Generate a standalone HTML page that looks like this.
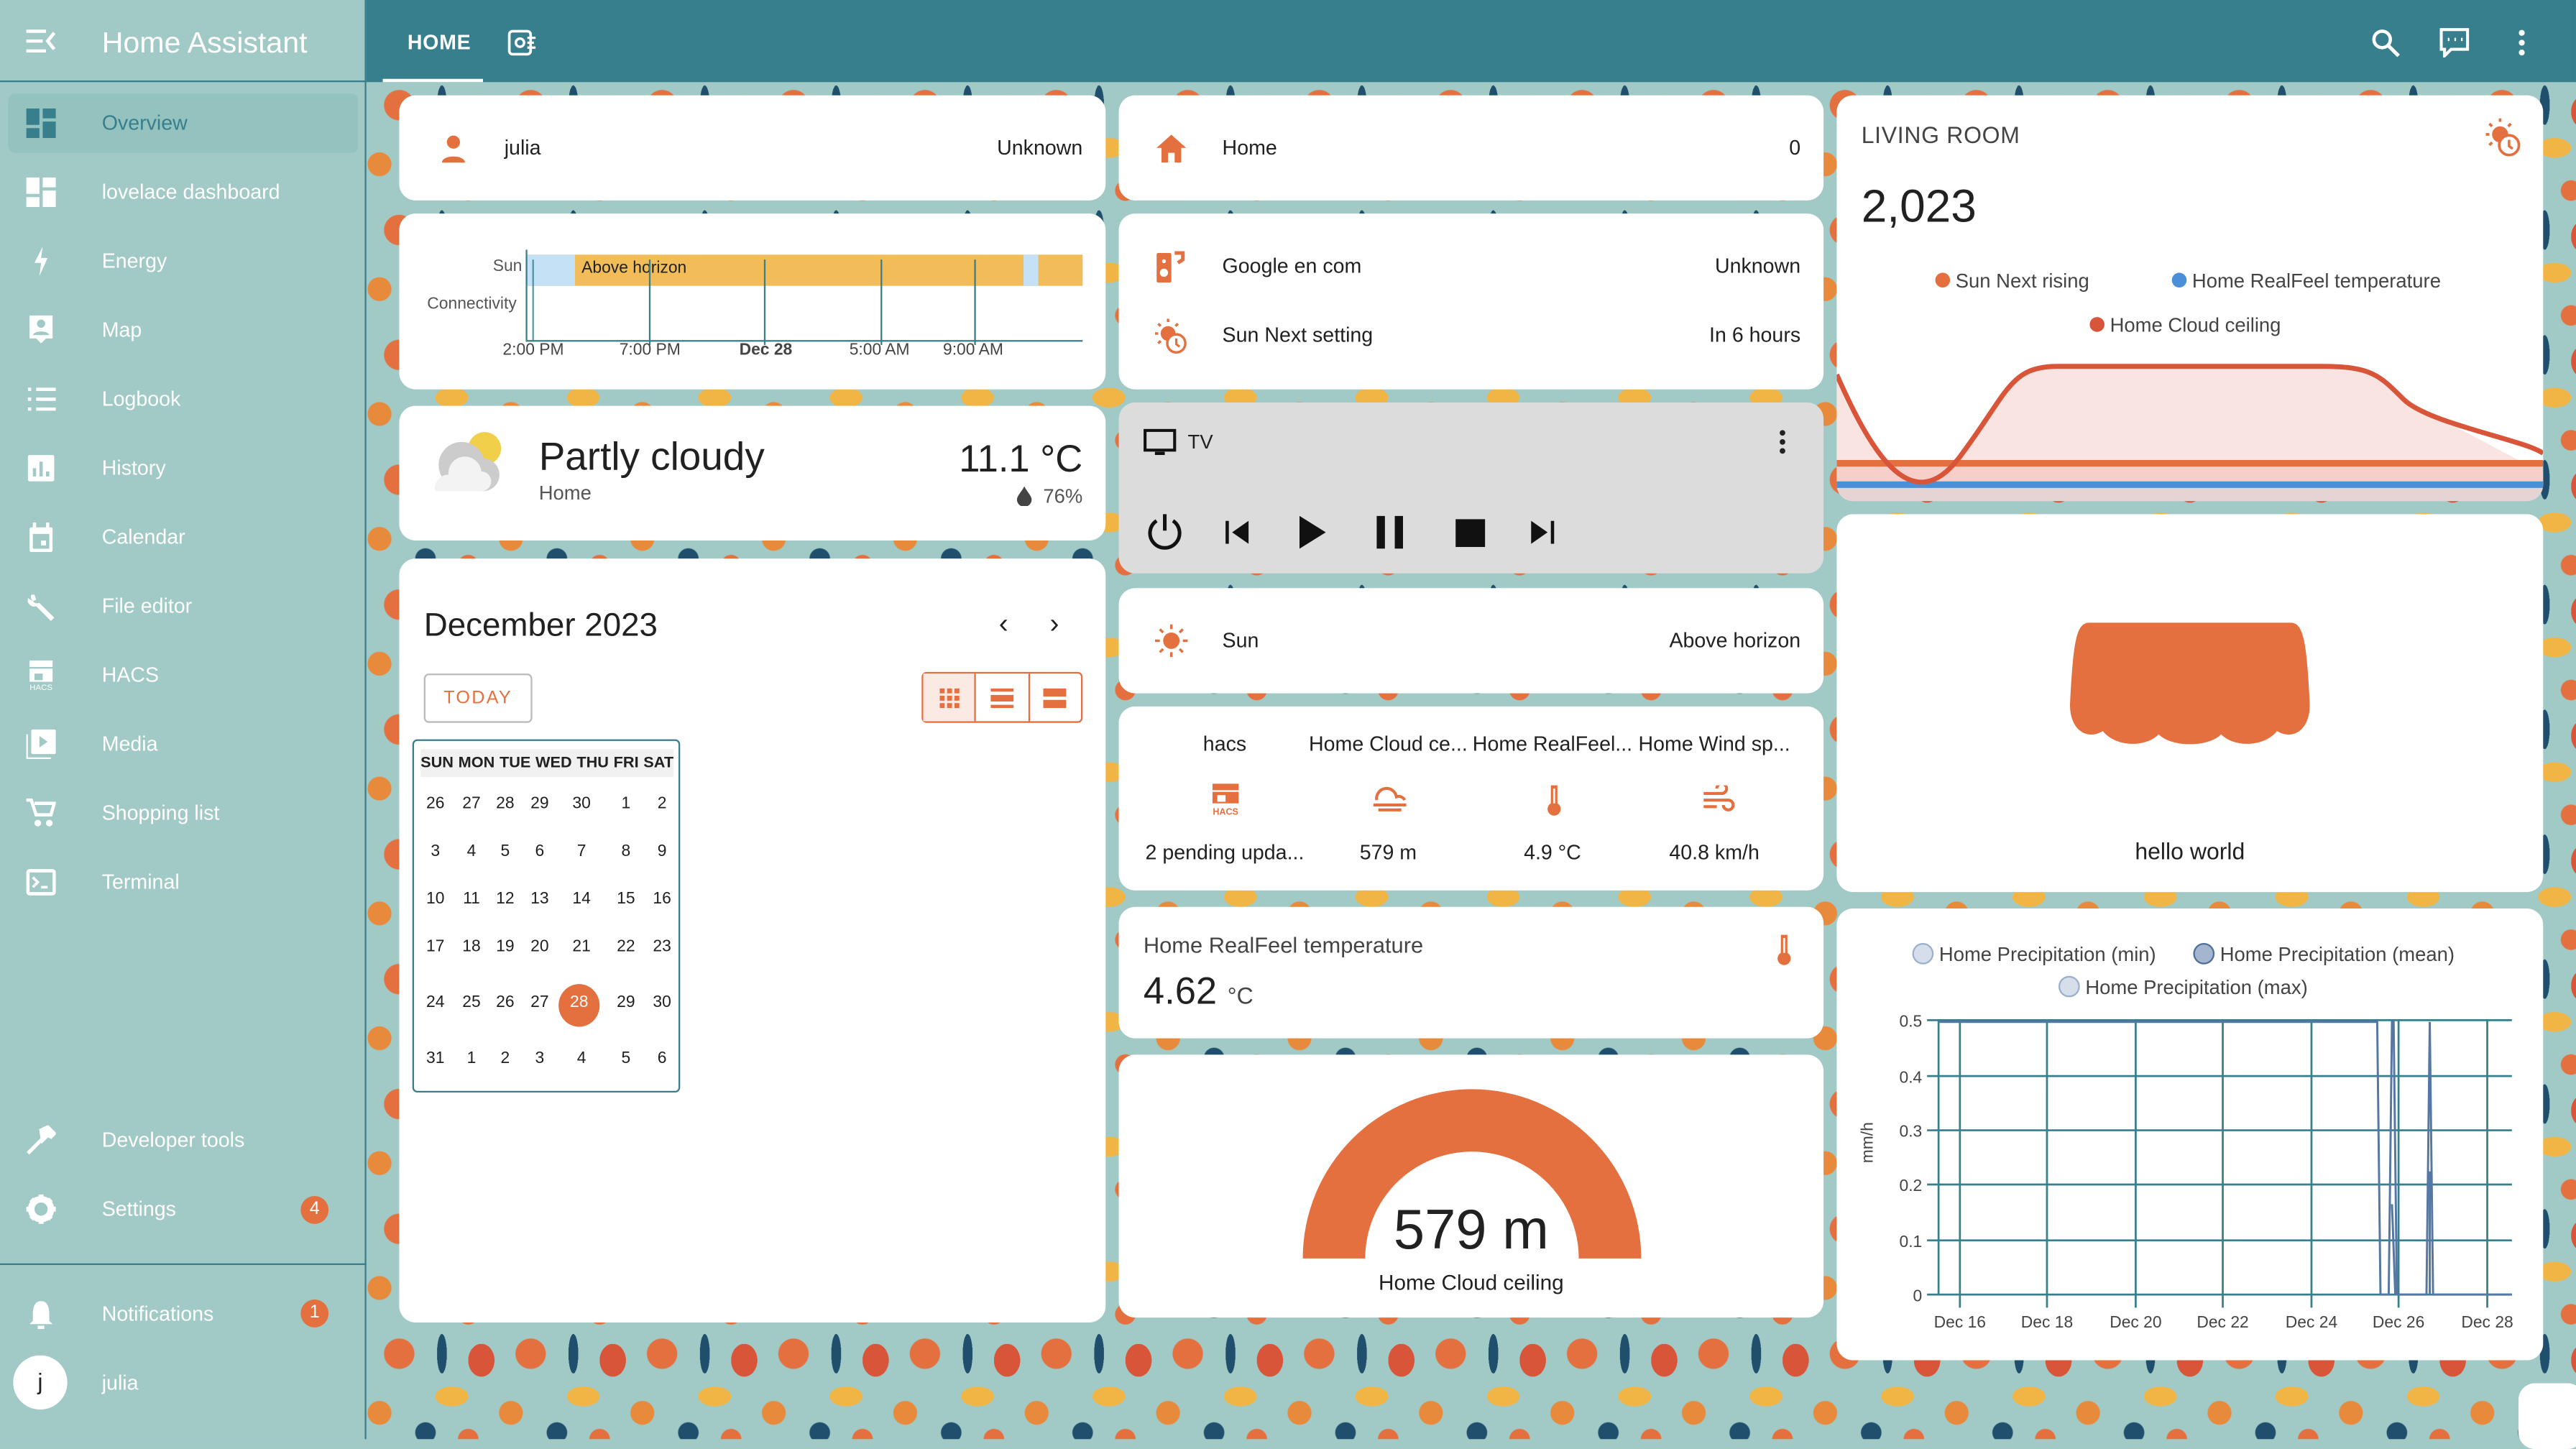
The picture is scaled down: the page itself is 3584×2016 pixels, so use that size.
<!DOCTYPE html>
<html><head><meta charset="utf-8"><style>
*{box-sizing:border-box;margin:0;padding:0}
html,body{width:3584px;height:2002px;overflow:hidden;background:#a1cac7}
#w{position:absolute;left:0;top:0;width:1568px;height:876px;transform:scale(2.2857);transform-origin:0 0;font-family:"Liberation Sans",sans-serif;color:#212121;font-size:12.5px}
.a{position:absolute}
#bg{left:223px;top:50px;width:1345px;height:826px;background-color:#a1cac7;
background-image:
radial-gradient(circle at 20px 14px,#e4703f 0 9px,transparent 9.5px),
radial-gradient(ellipse 10px 6px at 52px 40px,#f0b545 0 100%,transparent 100%),
radial-gradient(circle at 36px 62px,#1f4f6c 0 6px,transparent 6.5px),
radial-gradient(ellipse 8px 10px at 70px 18px,#d9553a 0 100%,transparent 100%),
radial-gradient(circle at 8px 50px,#e88a3c 0 7px,transparent 7.5px),
radial-gradient(circle at 62px 66px,#e4703f 0 6px,transparent 6.5px),
radial-gradient(ellipse 3px 12px at 46px 14px,#1f4f6c 0 100%,transparent 100%);
background-size:80px 76px}
#side{left:0;top:0;width:223px;height:876px;background:#a1cac7;border-right:1px solid #387f8d}
#top{left:223px;top:0;width:1345px;height:50px;background:#387f8d}
.card{position:absolute;background:#fff;border-radius:10px}
.si{position:absolute;left:62px;color:#fff;font-size:12.5px}
.ic{position:absolute;left:16px;width:18px;height:18px}
.row{position:absolute;font-size:12.5px}
.dot{display:inline-block;width:9px;height:9px;border-radius:50%;vertical-align:0}
</style></head><body><div id="w">
<div class="a" id="bg"></div>
<div class="a" id="side">
 <div class="a" style="left:0;top:0;width:223px;height:50px;border-bottom:1px solid #387f8d"></div>
 <svg class="a" style="left:16px;top:18px" width="18" height="14" viewBox="0 0 18 14"><path d="M0 1h12M0 7h10M0 13h12M17 2l-4 5 4 5" stroke="#fff" stroke-width="2" fill="none"/></svg>
 <div class="a" style="left:62px;top:16px;color:#fff;font-size:18px">Home Assistant</div>
 <div class="a" style="left:5px;top:57px;width:213px;height:36px;background:#93c2bf;border-radius:4px"></div>
 <svg class="ic" style="top:66px" viewBox="0 0 18 18"><path d="M0 0h8v10H0zM10 0h8v6h-8zM10 8h8v10h-8zM0 12h8v6H0z" fill="#387f8d"/></svg>
 <div class="si" style="top:68px;color:#387f8d">Overview</div>
 <svg class="ic" style="top:108px" viewBox="0 0 18 18"><path d="M0 0h8v10H0zM10 0h8v6h-8zM10 8h8v10h-8zM0 12h8v6H0z" fill="#fff"/></svg>
 <div class="si" style="top:110px">lovelace dashboard</div>
 <svg class="ic" style="top:150px" viewBox="0 0 18 18"><path d="M10 0L5 10h4l-1 8 5-11H9z" fill="#fff"/></svg>
 <div class="si" style="top:152px">Energy</div>
 <svg class="ic" style="top:192px" viewBox="0 0 18 18"><path d="M2 0h14v14h-4l-3 3-3-3H2z" fill="#fff"/><circle cx="9" cy="5" r="2.5" fill="#a1cac7"/><path d="M4 12c1-3 9-3 10 0z" fill="#a1cac7"/></svg>
 <div class="si" style="top:194px">Map</div>
 <svg class="ic" style="top:234px" viewBox="0 0 18 18"><path d="M6 3h12M6 9h12M6 15h12M1 3h2M1 9h2M1 15h2" stroke="#fff" stroke-width="2"/></svg>
 <div class="si" style="top:236px">Logbook</div>
 <svg class="ic" style="top:276px" viewBox="0 0 18 18"><rect x="1" y="1" width="16" height="16" rx="1" fill="#fff"/><path d="M5 14V9M9 14V5M13 14v-3" stroke="#a1cac7" stroke-width="2"/></svg>
 <div class="si" style="top:278px">History</div>
 <svg class="ic" style="top:318px" viewBox="0 0 18 18"><rect x="2" y="3" width="14" height="15" rx="1" fill="#fff"/><rect x="4" y="7" width="10" height="9" fill="#a1cac7"/><rect x="9" y="11" width="3" height="3" fill="#fff"/><path d="M5 0v4M13 0v4" stroke="#fff" stroke-width="2"/></svg>
 <div class="si" style="top:320px">Calendar</div>
 <svg class="ic" style="top:360px" viewBox="0 0 18 18"><path d="M3 2a4 4 0 005 5l9 9-2 2-9-9a4 4 0 01-5-5l3 2 2-1-1-3z" fill="#fff"/></svg>
 <div class="si" style="top:362px">File editor</div>
 <svg class="ic" style="top:402px" viewBox="0 0 18 18"><rect x="2" y="0" width="14" height="4" fill="#fff"/><rect x="2" y="5" width="14" height="8" fill="#fff"/><rect x="5" y="8" width="5" height="4" fill="#a1cac7"/><text x="9" y="18" font-size="5" fill="#fff" text-anchor="middle" font-family="Liberation Sans">HACS</text></svg>
 <div class="si" style="top:404px">HACS</div>
 <svg class="ic" style="top:444px" viewBox="0 0 18 18"><rect x="3" y="0" width="15" height="15" rx="1" fill="#fff"/><path d="M0 3v15h15" stroke="#fff" stroke-width="2" fill="none"/><path d="M8 4v7l5-3.5z" fill="#a1cac7"/></svg>
 <div class="si" style="top:446px">Media</div>
 <svg class="ic" style="top:486px" viewBox="0 0 18 18"><path d="M0 1h3l3 9h9l2-7H5" stroke="#fff" stroke-width="2" fill="none"/><circle cx="7" cy="15" r="2" fill="#fff"/><circle cx="14" cy="15" r="2" fill="#fff"/></svg>
 <div class="si" style="top:488px">Shopping list</div>
 <svg class="ic" style="top:528px" viewBox="0 0 18 18"><rect x="1" y="2" width="16" height="14" rx="1" stroke="#fff" stroke-width="2" fill="none"/><path d="M4 6l3 3-3 3M9 12h4" stroke="#fff" stroke-width="1.6" fill="none"/></svg>
 <div class="si" style="top:530px">Terminal</div>
 <svg class="ic" style="top:685px" viewBox="0 0 18 18"><path d="M1 17l10-10M9 3l4-2 4 4-2 2-2-1-3 3z" stroke="#fff" stroke-width="2.2" fill="#fff"/></svg>
 <div class="si" style="top:687px">Developer tools</div>
 <svg class="ic" style="top:727px" viewBox="0 0 18 18"><circle cx="9" cy="9" r="6" fill="none" stroke="#fff" stroke-width="4"/><path d="M9 0v4M9 14v4M0 9h4M14 9h4M3 3l3 3M12 12l3 3M3 15l3-3M12 6l3-3" stroke="#fff" stroke-width="3"/></svg>
 <div class="si" style="top:729px">Settings</div>
 <div class="a" style="left:183px;top:728px;width:17px;height:17px;border-radius:50%;background:#e4703f;color:#fff;font-size:11px;text-align:center;line-height:17px">4</div>
 <div class="a" style="left:0;top:769px;width:223px;border-top:1px solid #387f8d"></div>
 <svg class="ic" style="top:791px" viewBox="0 0 18 18"><path d="M9 1c4 0 5 4 5 8v4l2 2H2l2-2V9c0-4 1-8 5-8z" fill="#fff"/><path d="M7 17h4" stroke="#fff" stroke-width="2"/></svg>
 <div class="si" style="top:793px">Notifications</div>
 <div class="a" style="left:183px;top:791px;width:17px;height:17px;border-radius:50%;background:#e4703f;color:#fff;font-size:11px;text-align:center;line-height:17px">1</div>
 <div class="a" style="left:8px;top:825px;width:33px;height:33px;border-radius:50%;background:#fff;text-align:center;line-height:33px;font-size:14px">j</div>
 <div class="si" style="top:835px">julia</div>
</div>
<div class="a" id="top">
 <div class="a" style="left:25px;top:19px;color:#fff;font-size:12.5px;font-weight:bold;letter-spacing:.3px">HOME</div>
 <div class="a" style="left:10px;top:48px;width:61px;height:2px;background:#fff"></div>
 <svg class="a" style="left:86px;top:18px" width="18" height="16" viewBox="0 0 18 16"><rect x="1" y="1" width="13" height="14" rx="2" stroke="#fff" stroke-width="1.6" fill="none"/><circle cx="7.5" cy="8" r="2.5" stroke="#fff" stroke-width="1.5" fill="none"/><path d="M12 5h5M12 8h4M12 11h5" stroke="#fff" stroke-width="1.4"/></svg>
 <svg class="a" style="left:1220px;top:17px" width="18" height="18" viewBox="0 0 18 18"><circle cx="7" cy="7" r="5" stroke="#fff" stroke-width="2" fill="none"/><path d="M11 11l6 6" stroke="#fff" stroke-width="2.2"/></svg>
 <svg class="a" style="left:1262px;top:17px" width="18" height="18" viewBox="0 0 18 18"><path d="M1 1h16v12H7l-4 4v-4H1z" stroke="#fff" stroke-width="1.8" fill="none"/><path d="M5 7h1M9 7h1M13 7h1" stroke="#fff" stroke-width="2"/></svg>
 <svg class="a" style="left:1309px;top:17px" width="6" height="18" viewBox="0 0 6 18"><circle cx="3" cy="3" r="1.8" fill="#fff"/><circle cx="3" cy="9" r="1.8" fill="#fff"/><circle cx="3" cy="15" r="1.8" fill="#fff"/></svg>
</div>

<!-- col1 -->
<div class="card" style="left:243px;top:58px;width:430px;height:64px">
 <svg class="a" style="left:25px;top:24px" width="16" height="18" viewBox="0 0 16 18"><circle cx="8" cy="4.5" r="4" fill="#e4703f"/><path d="M1 17c0-5 14-5 14 0z" fill="#e4703f"/></svg>
 <div class="row" style="left:64px;top:25px">julia</div>
 <div class="row" style="right:14px;top:25px">Unknown</div>
</div>
<div class="card" style="left:243px;top:130px;width:430px;height:107px">
 <div class="row" style="left:57px;top:27px;font-size:10px;color:#555">Sun</div>
 <div class="row" style="left:17px;top:50px;font-size:10px;color:#555">Connectivity</div>
 <div class="a" style="left:77px;top:25px;width:339px;height:19px;background:#f2bd58"></div>
 <div class="a" style="left:77px;top:25px;width:30px;height:19px;background:#c5e1f6"></div>
 <div class="a" style="left:380px;top:25px;width:9px;height:19px;background:#c5e1f6"></div>
 <div class="row" style="left:111px;top:28px;font-size:10px">Above horizon</div>
 <div class="a" style="left:77px;top:22px;width:1px;height:55px;background:#387f8d"></div>
 <div class="a" style="left:77px;top:77px;width:339px;height:1px;background:#387f8d"></div>
 <div class="a" style="left:81px;top:28px;width:1px;height:50px;background:#387f8d;opacity:.8"></div>
 <div class="a" style="left:152px;top:28px;width:1px;height:52px;background:#387f8d"></div>
 <div class="a" style="left:222px;top:28px;width:1px;height:52px;background:#387f8d"></div>
 <div class="a" style="left:293px;top:28px;width:1px;height:52px;background:#387f8d"></div>
 <div class="a" style="left:350px;top:28px;width:1px;height:52px;background:#387f8d"></div>
 <div class="row" style="left:63px;top:78px;font-size:10px;color:#444">2:00 PM</div>
 <div class="row" style="left:134px;top:78px;font-size:10px;color:#444">7:00 PM</div>
 <div class="row" style="left:207px;top:78px;font-size:10px;font-weight:bold;color:#444">Dec 28</div>
 <div class="row" style="left:274px;top:78px;font-size:10px;color:#444">5:00 AM</div>
 <div class="row" style="left:331px;top:78px;font-size:10px;color:#444">9:00 AM</div>
</div>
<div class="card" style="left:243px;top:247px;width:430px;height:82px">
 <svg class="a" style="left:18px;top:14px" width="48" height="44" viewBox="0 0 48 44"><circle cx="34" cy="12" r="10" fill="#f2cf4a"/><circle cx="20" cy="22" r="14" fill="#ccc"/><circle cx="33" cy="28" r="10" fill="#ccc"/><path d="M4 38a8 8 0 018-10 10 10 0 0120-2 6 6 0 010 12z" fill="#f3f3f3"/></svg>
 <div class="row" style="left:85px;top:18px;font-size:24px">Partly cloudy</div>
 <div class="row" style="left:85px;top:46px;font-size:12px;color:#555">Home</div>
 <div class="row" style="right:14px;top:19px;font-size:23px">11.1 °C</div>
 <svg class="a" style="left:376px;top:49px" width="9" height="12" viewBox="0 0 9 12"><path d="M4.5 0C3 3 0 6 0 8a4.5 4.5 0 009 0C9 6 6 3 4.5 0z" fill="#444"/></svg>
 <div class="row" style="right:14px;top:48px;font-size:12px;color:#555">76%</div>
</div>
<div class="card" style="left:243px;top:340px;width:430px;height:465px">
 <div class="row" style="left:15px;top:30px;font-size:20px">December 2023</div>
 <div class="row" style="left:365px;top:30px;font-size:17px">‹</div>
 <div class="row" style="left:396px;top:30px;font-size:17px">›</div>
 <div class="a" style="left:15px;top:70px;width:66px;height:30px;border:1px solid #bbb;border-radius:3px;color:#e4703f;font-size:11px;text-align:center;line-height:28px;letter-spacing:1px">TODAY</div>
 <div class="a" style="left:318px;top:69px;width:98px;height:31px;border:1px solid #e4703f;border-radius:3px;display:flex">
  <div style="flex:1;background:#fbe9e3;border-right:1px solid #e4703f;display:flex;align-items:center;justify-content:center"><svg width="12" height="12" viewBox="0 0 12 12"><path d="M0 0h3v3H0zM4.5 0h3v3h-3zM9 0h3v3H9zM0 4.5h3v3H0zM4.5 4.5h3v3h-3zM9 4.5h3v3H9zM0 9h3v3H0zM4.5 9h3v3h-3zM9 9h3v3H9z" fill="#e4703f"/></svg></div>
  <div style="flex:1;border-right:1px solid #e4703f;display:flex;align-items:center;justify-content:center"><svg width="14" height="12" viewBox="0 0 14 12"><path d="M0 0h14v2H0zM0 4h14v4H0zM0 10h14v2H0z" fill="#e4703f"/></svg></div>
  <div style="flex:1;display:flex;align-items:center;justify-content:center"><svg width="14" height="12" viewBox="0 0 14 12"><path d="M0 0h14v5H0zM0 7h14v5H0z" fill="#e4703f"/></svg></div>
 </div>
 <div class="a" style="left:8px;top:110px;width:163px;height:215px;border:1px solid #387f8d;border-radius:3px"></div>
 <div class="a" style="left:13px;top:116px;width:154px;font-size:9.5px;font-weight:bold;display:flex;justify-content:space-between;background:#f1f1f1;padding:3px 0">
 <span>SUN</span><span>MON</span><span>TUE</span><span>WED</span><span>THU</span><span>FRI</span><span>SAT</span></div>
 <div class="a" style="top:259px;width:25px;height:26px;border-radius:50%;background:#e4703f;left:97px"></div>
 <div class="a" style="left:97px;top:265px;width:25px;text-align:center;color:#fff;font-size:10px">28</div>
 <div class="a" style="left:10px;top:144px;width:160px;font-size:10px;line-height:12px">
  <div style="display:grid;grid-template-columns:24px 20px 21px 21px 30px 24px 20px;text-align:center;row-gap:17px">
   <span>26</span><span>27</span><span>28</span><span>29</span><span>30</span><span>1</span><span>2</span>
   <span>3</span><span>4</span><span>5</span><span>6</span><span>7</span><span>8</span><span>9</span>
   <span>10</span><span>11</span><span>12</span><span>13</span><span>14</span><span>15</span><span>16</span>
   <span>17</span><span>18</span><span>19</span><span>20</span><span>21</span><span>22</span><span>23</span>
  </div>
  <div style="display:grid;grid-template-columns:24px 20px 21px 21px 30px 24px 20px;text-align:center;margin-top:22px">
   <span>24</span><span>25</span><span>26</span><span>27</span><span></span><span>29</span><span>30</span>
  </div>
  <div style="display:grid;grid-template-columns:24px 20px 21px 21px 30px 24px 20px;text-align:center;margin-top:22px">
   <span>31</span><span>1</span><span>2</span><span>3</span><span>4</span><span>5</span><span>6</span>
  </div>
 </div>
</div>

<!-- col2 -->
<div class="card" style="left:681px;top:58px;width:429px;height:64px">
 <svg class="a" style="left:23px;top:24px" width="18" height="17" viewBox="0 0 18 17"><path d="M9 0l9 8h-3v9h-4v-6H7v6H3V8H0z" fill="#e4703f"/></svg>
 <div class="row" style="left:63px;top:25px">Home</div>
 <div class="row" style="right:14px;top:25px">0</div>
</div>
<div class="card" style="left:681px;top:130px;width:429px;height:107px">
 <svg class="a" style="left:23px;top:22px" width="18" height="20" viewBox="0 0 18 20"><rect x="0" y="2" width="9" height="18" rx="1" fill="#e4703f"/><circle cx="4.5" cy="14" r="2.5" fill="#fff"/><circle cx="4.5" cy="7" r="1.2" fill="#fff"/><path d="M11 2h5v4l-3 2" stroke="#e4703f" stroke-width="2.2" fill="none"/></svg>
 <div class="row" style="left:63px;top:25px">Google en com</div>
 <div class="row" style="right:14px;top:25px">Unknown</div>
 <svg class="a" style="left:22px;top:64px" width="20" height="22" viewBox="0 0 20 22"><circle cx="8" cy="9" r="4.5" fill="#e4703f"/><path d="M8 0v2M0 9h2M2 3l1.5 1.5M14 3l-1.5 1.5M2 15l1.5-1.5" stroke="#e4703f" stroke-width="1.5"/><circle cx="13" cy="15" r="5.5" fill="#fff" stroke="#e4703f" stroke-width="1.5"/><path d="M13 12v3.5l2 1.5" stroke="#e4703f" stroke-width="1.4" fill="none"/></svg>
 <div class="row" style="left:63px;top:67px">Sun Next setting</div>
 <div class="row" style="right:14px;top:67px">In 6 hours</div>
</div>
<div class="card" style="left:681px;top:245px;width:429px;height:104px;background:#dcdcdc">
 <svg class="a" style="left:15px;top:16px" width="20" height="16" viewBox="0 0 20 16"><rect x="1" y="1" width="18" height="12" stroke="#111" stroke-width="1.8" fill="none"/><path d="M7 15h6" stroke="#111" stroke-width="2"/></svg>
 <div class="row" style="left:42px;top:17px;font-size:12px">TV</div>
 <svg class="a" style="left:401px;top:16px" width="6" height="16" viewBox="0 0 6 16"><circle cx="3" cy="2.5" r="1.7" fill="#222"/><circle cx="3" cy="8" r="1.7" fill="#222"/><circle cx="3" cy="13.5" r="1.7" fill="#222"/></svg>
 <svg class="a" style="left:16px;top:67px" width="24" height="24" viewBox="0 0 24 24"><path d="M7 5a9 9 0 1010 0" stroke="#111" stroke-width="2.2" fill="none"/><path d="M12 1v10" stroke="#111" stroke-width="2.2"/></svg>
 <svg class="a" style="left:64px;top:72px" width="16" height="14" viewBox="0 0 16 14"><path d="M1 0h2v14H1zM15 0v14L5 7z" fill="#111"/></svg>
 <svg class="a" style="left:109px;top:69px" width="18" height="20" viewBox="0 0 18 20"><path d="M1 0l16 10L1 20z" fill="#111"/></svg>
 <svg class="a" style="left:155px;top:69px" width="20" height="20" viewBox="0 0 20 20"><path d="M2 0h5v20H2zM13 0h5v20h-5z" fill="#111"/></svg>
 <svg class="a" style="left:205px;top:71px" width="18" height="17" viewBox="0 0 18 17"><path d="M0 0h18v17H0z" fill="#111"/></svg>
 <svg class="a" style="left:250px;top:72px" width="16" height="14" viewBox="0 0 16 14"><path d="M13 0h2v14h-2zM1 0v14l10-7z" fill="#111"/></svg>
</div>
<div class="card" style="left:681px;top:358px;width:429px;height:64px">
 <svg class="a" style="left:22px;top:22px" width="20" height="20" viewBox="0 0 20 20"><circle cx="10" cy="10" r="5" fill="#e4703f"/><path d="M10 0v3M10 17v3M0 10h3M17 10h3M3 3l2 2M15 15l2 2M3 17l2-2M15 5l2-2" stroke="#e4703f" stroke-width="1.5"/></svg>
 <div class="row" style="left:63px;top:25px">Sun</div>
 <div class="row" style="right:14px;top:25px">Above horizon</div>
</div>
<div class="card" style="left:681px;top:430px;width:429px;height:112px">
 <div class="row" style="left:0;width:129px;top:16px;text-align:center">hacs</div>
 <div class="row" style="left:108px;width:112px;top:16px;text-align:center">Home Cloud ce...</div>
 <div class="row" style="left:208px;width:112px;top:16px;text-align:center">Home RealFeel...</div>
 <div class="row" style="left:305px;width:115px;top:16px;text-align:center">Home Wind sp...</div>
 <svg class="a" style="left:57px;top:47px" width="16" height="20" viewBox="0 0 16 20"><rect x="0" y="0" width="16" height="4" fill="#e4703f"/><rect x="0" y="5" width="16" height="7" fill="#e4703f"/><rect x="3" y="7" width="5" height="4" fill="#fff"/><text x="8" y="19" font-size="5.5" fill="#e4703f" text-anchor="middle" font-weight="bold" font-family="Liberation Sans">HACS</text></svg>
 <svg class="a" style="left:154px;top:48px" width="22" height="16" viewBox="0 0 22 16"><path d="M3 9a6 6 0 0112-2 4 4 0 015 2M1 12h20M4 15h14" stroke="#e4703f" stroke-width="1.8" fill="none"/></svg>
 <svg class="a" style="left:260px;top:47px" width="10" height="20" viewBox="0 0 10 20"><path d="M3 1h4v11a4 4 0 11-4 0z" fill="#e4703f"/><path d="M5 3v9" stroke="#fff" stroke-width="1.2"/></svg>
 <svg class="a" style="left:355px;top:48px" width="20" height="18" viewBox="0 0 20 18"><path d="M1 5h11a3 3 0 10-3-3M1 9h15a3 3 0 11-3 3M1 13h8" stroke="#e4703f" stroke-width="1.8" fill="none"/></svg>
 <div class="row" style="left:0;width:129px;top:82px;text-align:center">2 pending upda...</div>
 <div class="row" style="left:108px;width:112px;top:82px;text-align:center">579 m</div>
 <div class="row" style="left:208px;width:112px;top:82px;text-align:center">4.9 °C</div>
 <div class="row" style="left:305px;width:115px;top:82px;text-align:center">40.8 km/h</div>
</div>
<div class="card" style="left:681px;top:552px;width:429px;height:80px">
 <div class="row" style="left:15px;top:16px;font-size:13.5px;color:#444">Home RealFeel temperature</div>
 <div class="row" style="left:15px;top:38px;font-size:23px">4.62 <span style="font-size:14px;color:#444">°C</span></div>
 <svg class="a" style="left:400px;top:16px" width="10" height="20" viewBox="0 0 10 20"><path d="M3 1h4v11a4 4 0 11-4 0z" fill="#e4703f"/><path d="M5 3v9" stroke="#fff" stroke-width="1.2"/></svg>
</div>
<div class="card" style="left:681px;top:642px;width:429px;height:160px">
 <svg class="a" style="left:110px;top:18px" width="210" height="108" viewBox="0 0 210 108"><path d="M2 106A103 103 0 01208 106H170A65 65 0 0040 106z" fill="#e4703f"/></svg>
 <div class="row" style="left:0;width:429px;top:88px;text-align:center;font-size:34px">579 m</div>
 <div class="row" style="left:0;width:429px;top:131px;text-align:center;font-size:13px">Home Cloud ceiling</div>
</div>

<!-- col3 -->
<div class="card" style="left:1118px;top:58px;width:430px;height:247px;overflow:hidden">
 <div class="row" style="left:15px;top:16px;font-size:14px;color:#444;letter-spacing:.3px">LIVING ROOM</div>
 <svg class="a" style="left:395px;top:14px" width="22" height="24" viewBox="0 0 20 22"><circle cx="8" cy="9" r="4.5" fill="#e4703f"/><path d="M8 0v2M0 9h2M2 3l1.5 1.5M14 3l-1.5 1.5M2 15l1.5-1.5" stroke="#e4703f" stroke-width="1.5"/><circle cx="13" cy="15" r="5.5" fill="#fff" stroke="#e4703f" stroke-width="1.5"/><path d="M13 12v3.5l2 1.5" stroke="#e4703f" stroke-width="1.4" fill="none"/></svg>
 <div class="row" style="left:15px;top:52px;font-size:28px">2,023</div>
 <div class="row" style="left:60px;top:106px;font-size:12px;color:#444"><span class="dot" style="background:#e4703f"></span> Sun Next rising</div>
 <div class="row" style="left:204px;top:106px;font-size:12px;color:#444"><span class="dot" style="background:#4a90d9"></span> Home RealFeel temperature</div>
 <div class="row" style="left:154px;top:133px;font-size:12px;color:#444"><span class="dot" style="background:#d9553a"></span> Home Cloud ceiling</div>
 <svg class="a" style="left:0;top:160px" width="430" height="87" viewBox="0 0 430 87"><path d="M0 10C20 55 45 100 75 60S105 5 135 5H295C325 5 330 10 345 25L430 70V87H0z" fill="#f9e4e1"/><rect x="0" y="62" width="430" height="15" fill="#f5cfc8"/><rect x="0" y="78" width="430" height="9" fill="#e6d3d3"/><path d="M0 64H430" stroke="#e4703f" stroke-width="4"/><path d="M0 77H430" stroke="#4a90d9" stroke-width="4"/><path d="M0 10C20 55 45 100 75 60S105 5 135 5H295C325 5 330 10 345 25S420 50 430 58" stroke="#d9553a" stroke-width="3" fill="none"/></svg>
</div>
<div class="card" style="left:1118px;top:313px;width:430px;height:230px">
 <svg class="a" style="left:142px;top:66px" width="146" height="76" viewBox="0 0 146 76"><path d="M12 0H134C142 0 144 10 146 50C146 65 136 72 126 66C118 76 100 76 92 68C84 76 62 76 54 68C46 76 28 76 20 66C10 72 0 65 0 50C2 10 4 0 12 0z" fill="#e4703f"/></svg>
 <div class="row" style="left:0;width:430px;top:197px;text-align:center;font-size:14px">hello world</div>
</div>
<div class="card" style="left:1118px;top:553px;width:430px;height:275px">
 <div class="row" style="left:46px;top:21px;font-size:12px;color:#444"><span style="display:inline-block;width:13px;height:13px;border-radius:50%;background:#d5deea;border:1px solid #9cb0cc;vertical-align:-2px"></span> Home Precipitation (min)</div>
 <div class="row" style="left:217px;top:21px;font-size:12px;color:#444"><span style="display:inline-block;width:13px;height:13px;border-radius:50%;background:#a4b6cf;border:1px solid #4f6f9a;vertical-align:-2px"></span> Home Precipitation (mean)</div>
 <div class="row" style="left:135px;top:41px;font-size:12px;color:#444"><span style="display:inline-block;width:13px;height:13px;border-radius:50%;background:#d5deea;border:1px solid #9cb0cc;vertical-align:-2px"></span> Home Precipitation (max)</div>
 <div class="row" style="left:14px;top:155px;font-size:10px;color:#444;transform:rotate(-90deg);transform-origin:0 0">mm/h</div>
 <svg class="a" style="left:0;top:60px" width="430" height="200" viewBox="0 0 430 200">
  <g stroke="#387f8d" stroke-width="1.2">
   <path d="M55 8H411M55 42H411M55 75H411M55 108H411M55 142H411M55 175H411"/>
   <path d="M75 8V183M128 8V183M182 8V183M235 8V183M289 8V183M342 8V183M396 8V183"/>
   <path d="M62 8V175"/>
  </g>
  <path d="M62 9H329L331 175H336L338 9H339L341 175H359L361 9L363 175H411" stroke="#5577a3" stroke-width="1.3" fill="none"/>
  <path d="M338 120L340 175M361 100V175" stroke="#5577a3" stroke-width="1.3"/>
  <g font-size="10" fill="#444" font-family="Liberation Sans">
   <text x="52" y="12" text-anchor="end">0.5</text><text x="52" y="46" text-anchor="end">0.4</text><text x="52" y="79" text-anchor="end">0.3</text><text x="52" y="112" text-anchor="end">0.2</text><text x="52" y="146" text-anchor="end">0.1</text><text x="52" y="179" text-anchor="end">0</text>
   <text x="75" y="195" text-anchor="middle">Dec 16</text><text x="128" y="195" text-anchor="middle">Dec 18</text><text x="182" y="195" text-anchor="middle">Dec 20</text><text x="235" y="195" text-anchor="middle">Dec 22</text><text x="289" y="195" text-anchor="middle">Dec 24</text><text x="342" y="195" text-anchor="middle">Dec 26</text><text x="396" y="195" text-anchor="middle">Dec 28</text>
  </g>
 </svg>
</div>
<div class="card" style="left:1533px;top:842px;width:40px;height:40px"></div>
</div></body></html>
